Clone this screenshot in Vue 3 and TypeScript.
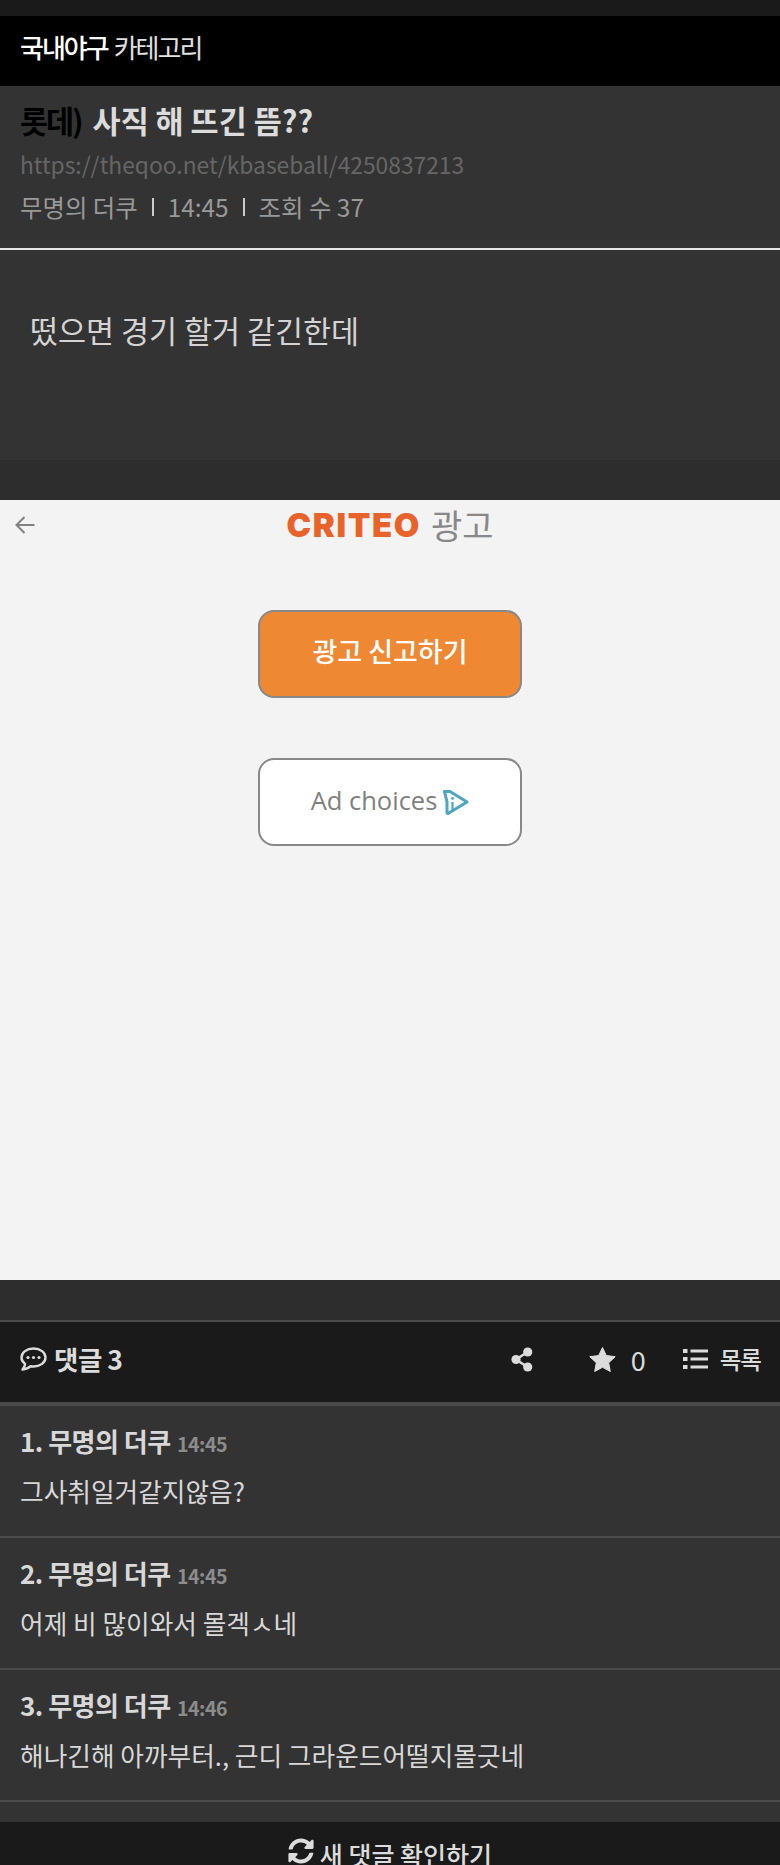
<script setup lang="ts">
interface Comment {
  no: number;
  time: string;
  text: string;
}

const comments: Comment[] = [
  { no: 1, time: '14:45', text: '그사취일거같지않음?' },
  { no: 2, time: '14:45', text: '어제 비 많이와서 몰겍ㅅ네' },
  { no: 3, time: '14:46', text: '해나긴해 아까부터., 근디 그라운드어떨지몰긋네' }
];
</script>

<template>
  <div class="page">
    <header class="board">
      <b>국내야구</b>
      <span>카테고리</span>
    </header>

    <section class="head">
      <h1><em>롯데)</em> 사직 해 뜨긴 뜸??</h1>
      <div class="url">https://theqoo.net/kbaseball/4250837213</div>
      <div class="meta">
        <span>무명의 더쿠</span>
        <i class="sep"></i>
        <span>14:45</span>
        <i class="sep"></i>
        <span>조회 수 37</span>
      </div>
    </section>

    <article class="body">떴으면 경기 할거 같긴한데</article>

    <section class="ad">
      <div class="ad-top">
        <svg class="back" viewBox="0 0 22 22" width="22" height="22">
          <path d="M20.5 11H2.5M10.5 3L2.5 11L10.5 19" fill="none" stroke="#808080" stroke-width="2" />
        </svg>
        <div class="ad-title">
          <span class="criteo">CRITEO</span>
          <span class="ad-word">광고</span>
        </div>
      </div>
      <div class="ad-btn report">광고 신고하기</div>
      <div class="ad-btn choices">
        <span>Ad choices</span>
        <svg viewBox="0 0 27 26" width="27" height="26">
          <path d="M2.500 2.500H8L25 13L6 24.500" fill="none" stroke="#4ba6c4" stroke-width="3" stroke-linejoin="round" stroke-linecap="round" />
          <path d="M2.500 2.500L5 13V24" fill="none" stroke="#4ba6c4" stroke-width="3" stroke-linecap="round" />
          <path d="M10.500 13V21" stroke="#4ba6c4" stroke-width="2.200" />
          <circle cx="10.500" cy="9.500" r="1.400" fill="#4ba6c4" />
        </svg>
      </div>
    </section>

    <div class="comment-bar">
      <div class="count">
        <svg viewBox="0 0 27 25" width="27" height="25">
          <path d="M13.500 1.500C6.700 1.500 1.500 5.400 1.500 10.500c0 2.500 1.300 4.800 3.600 6.400-.2 2.100-1 3.800-2.600 5.600 3.400-.2 6.200-1.400 8.100-3.300 1 .2 1.900.3 2.900.3 6.800 0 12-3.900 12-9S20.300 1.500 13.500 1.500z" fill="none" stroke="#dcdcdc" stroke-width="2.400" stroke-linejoin="round" />
          <circle cx="8" cy="10.500" r="1.600" fill="#dcdcdc" />
          <circle cx="13.500" cy="10.500" r="1.600" fill="#dcdcdc" />
          <circle cx="19" cy="10.500" r="1.600" fill="#dcdcdc" />
        </svg>
        <span>댓글 3</span>
      </div>
      <div class="tools">
        <svg class="share" viewBox="0 0 22 25" width="22" height="25">
          <path d="M16.500 5L5 12.500L16.500 20" fill="none" stroke="#dcdcdc" stroke-width="2.600" />
          <circle cx="16.700" cy="5" r="4.600" fill="#dcdcdc" />
          <circle cx="5" cy="12.500" r="4.600" fill="#dcdcdc" />
          <circle cx="16.700" cy="20" r="4.600" fill="#dcdcdc" />
        </svg>
        <svg class="star" viewBox="0 0 27 25" width="27" height="25">
          <path d="M13.500 .5L17.300 8.500L26.200 9.700L19.700 15.800L21.300 24.500L13.500 20.300L5.700 24.500L7.300 15.800L.8 9.700L9.700 8.500Z" fill="#dcdcdc" stroke="#dcdcdc" stroke-linejoin="round" />
        </svg>
        <span class="zero">0</span>
        <svg class="list" viewBox="0 0 25 22" width="25" height="22">
          <path d="M0 1h4.500v4H0zM0 9h4.500v4H0zM0 17h4.500v4H0zM7.500 1.500H25v3H7.500zM7.500 9.500H25v3H7.500zM7.500 17.500H25v3H7.500z" fill="#dcdcdc" />
        </svg>
        <span class="list-label">목록</span>
      </div>
    </div>

    <ul class="comments">
      <li v-for="c in comments" :key="c.no">
        <div class="who">{{ c.no }}. 무명의 더쿠 <small>{{ c.time }}</small></div>
        <p>{{ c.text }}</p>
      </li>
    </ul>

    <footer class="refresh">
      <svg viewBox="0 0 512 512" width="26" height="26">
        <path d="M370.700 133.300C339.500 104 298.900 88 255.800 88c-77.500.1-144.300 53.200-162.800 126.900-1.300 5.400-6.100 9.100-11.600 9.100H24.100c-7.500 0-13.200-6.800-11.800-14.200C33.900 94.900 134.800 8 256 8c66.500 0 126.800 26.100 171.300 68.700L463 41c15.100-15.100 41-4.400 41 17v134c0 13.300-10.700 24-24 24H346c-21.400 0-32.100-25.900-17-41l41.700-41.700zM32 296h134c21.400 0 32.100 25.900 17 41l-41.700 41.700c31.200 29.300 71.800 45.300 114.900 45.300 77.400-.1 144.300-53.100 162.800-126.800 1.300-5.400 6.100-9.100 11.600-9.100h57.300c7.500 0 13.200 6.800 11.800 14.200C478.100 417.100 377.200 504 256 504c-66.500 0-126.800-26.100-171.300-68.700L49 471c-15.100 15.100-41 4.400-41-17V320c0-13.300 10.700-24 24-24z" fill="#dcdcdc" />
      </svg>
      <span>새 댓글 확인하기</span>
    </footer>
  </div>
</template>

<style>
html,
body {
  margin: 0;
  background: #333;
}
</style>

<style scoped>
.page {
  width: 780px;
  height: 1865px;
  overflow: hidden;
  background: #2d2d2d;
  font-family: "Noto Sans CJK KR", "Noto Sans", sans-serif;
  color: #dcdcdc;
}

.board {
  height: 60px;
  background: #000;
  border-top: 16px solid #1a1a1a;
  display: flex;
  align-items: center;
  gap: 6px;
  padding: 0 0 10px 20px;
  font-size: 26px;
  letter-spacing: -2px;
  color: #fff;
}

.board b {
  font-weight: 500;
}

.board span {
  color: #e0e0e0;
}

.head {
  height: 162px;
  box-sizing: border-box;
  background: #333;
  padding: 14px 20px 0;
}

h1 {
  margin: 0;
  font-size: 30.5px;
  line-height: 40px;
  font-weight: 700;
  color: #dcdcdc;
}

h1 em {
  font-style: normal;
  color: #000;
  letter-spacing: -2px;
  margin-right: 4px;
}

.url {
  margin-top: 8px;
  font-size: 22.8px;
  line-height: 34px;
  color: #666;
}

.meta {
  margin-top: 8px;
  display: flex;
  align-items: center;
  gap: 14px;
  font-size: 24.4px;
  line-height: 34px;
  color: #999;
}

.sep {
  width: 2px;
  height: 18px;
  background: #ccc;
}

.body {
  height: 212px;
  box-sizing: border-box;
  border-top: 2px solid #e6e6e6;
  background: #333;
  padding: 58px 30px 0;
  font-size: 30.5px;
  line-height: 44px;
  color: #d4d4d4;
}

.ad {
  margin-top: 40px;
  height: 780px;
  background: #f3f3f3;
  display: flex;
  flex-direction: column;
  align-items: center;
}

.ad-top {
  position: relative;
  width: 100%;
  height: 50px;
  display: flex;
  justify-content: center;
  align-items: center;
}

.back {
  position: absolute;
  left: 14px;
  top: 14px;
}

.ad-title {
  display: flex;
  align-items: center;
  gap: 10px;
}

.criteo {
  font-family: Inter, sans-serif;
  font-weight: 900;
  font-size: 33px;
  line-height: 40px;
  letter-spacing: 1.6px;
  color: #e8622a;
}

.ad-word {
  font-size: 34px;
  line-height: 40px;
  color: #888;
}

.ad-btn {
  box-sizing: border-box;
  width: 264px;
  height: 88px;
  border: 2px solid #888;
  border-radius: 16px;
  display: flex;
  align-items: center;
  justify-content: center;
  font-size: 27px;
}

.report {
  margin-top: 60px;
  background: #ee8833;
  color: #fff;
  font-weight: 500;
  padding-bottom: 8px;
}

.choices {
  margin-top: 60px;
  background: #fff;
  color: #808080;
  gap: 5px;
  font-family: "Open Sans", sans-serif;
  font-size: 25.5px;
  padding-bottom: 4px;
}

.choices svg {
  margin-top: 4px;
}

.comment-bar {
  margin-top: 40px;
  height: 82px;
  box-sizing: border-box;
  background: #1a1a1a;
  border-top: 2px solid #4a4a4a;
  display: flex;
  align-items: center;
  justify-content: space-between;
  padding: 0 19px 6px 20px;
  font-size: 26.5px;
}

.count {
  display: flex;
  align-items: center;
  gap: 7px;
  font-weight: 700;
  letter-spacing: -.5px;
}

.count span {
  margin-bottom: 1px;
}

.tools {
  display: flex;
  align-items: center;
}

.star {
  margin-left: 56px;
}

.zero {
  margin-left: 15px;
  font-size: 27px;
}

.list {
  margin-left: 37px;
}

.list-label {
  margin-left: 12px;
  font-size: 23.5px;
  font-weight: 500;
  letter-spacing: -1px;
}

.comments {
  margin: 0;
  padding: 0;
  list-style: none;
  background: #333;
  border-top: 4px solid #4a4a4a;
  height: 420px;
  box-sizing: border-box;
}

.comments li {
  height: 132px;
  box-sizing: border-box;
  padding: 16px 20px 0;
  border-bottom: 2px solid #4a4a4a;
}

.who {
  font-size: 26px;
  line-height: 38px;
  font-weight: 700;
  letter-spacing: -.5px;
  color: #d8d8d8;
}

.who small {
  margin-left: 1px;
  font-size: 19.5px;
  font-weight: 700;
  color: #8c8c8c;
}

.comments p {
  margin: 9px 0 0;
  font-size: 25.7px;
  line-height: 38px;
  color: #d8d8d8;
}

.refresh {
  height: 43px;
  background: #1a1a1a;
  display: flex;
  justify-content: center;
  align-items: flex-start;
  gap: 6px;
  font-size: 25px;
  line-height: 36px;
  font-weight: 500;
}

.refresh svg {
  margin-top: 16px;
}

.refresh span {
  margin-top: 14px;
}
</style>
